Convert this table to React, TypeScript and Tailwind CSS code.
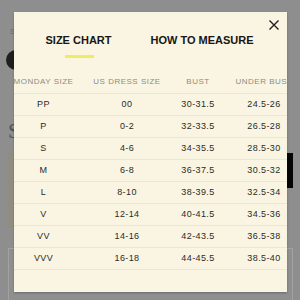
const rows = [
  ['PP', '00', '30-31.5', '24.5-26'],
  ['P', '0-2', '32-33.5', '26.5-28'],
  ['S', '4-6', '34-35.5', '28.5-30'],
  ['M', '6-8', '36-37.5', '30.5-32'],
  ['L', '8-10', '38-39.5', '32.5-34'],
  ['V', '12-14', '40-41.5', '34.5-36'],
  ['VV', '14-16', '42-43.5', '36.5-38'],
  ['VVV', '16-18', '44-45.5', '38.5-40'],
]

const headers = ['MONDAY SIZE', 'US DRESS SIZE', 'BUST', 'UNDER BUST']

export default function App() {
  return (
    <div
      className="relative w-[300px] h-[300px] overflow-hidden bg-[#8e8e8e]"
      style={{ fontFamily: '"Liberation Sans", Arial, sans-serif' }}
    >
      {/* dimmed page behind the modal */}
      <div className="flex flex-col pl-[6px] pr-[7px] pt-[28px]">
        <span className="pl-[4px] text-[7px] leading-[8px] text-[#6c6c6c]">S</span>
        <div className="mt-[14px] w-[22px] h-[20px] rounded-full bg-[#1e1e1e]" />
        <span
          className="mt-[50px] pl-[2px] text-[22px] leading-[22px] text-[#555]"
          style={{ fontFamily: '"Liberation Serif", serif' }}
        >
          S
        </span>
        <div className="mt-[11px] flex items-start">
          <div className="ml-[2px] flex-1 h-[75px] bg-[#908d80]" />
          <div className="w-[6px] h-[35px] bg-[#050505]" />
        </div>
        <div className="mt-[20px] ml-[2px] h-[60px] border border-[#a2a2a2] bg-[#8f8f8f]" />
      </div>

      {/* size chart modal */}
      <div className="absolute left-[14px] top-[12px] w-[273px] h-[280px] overflow-hidden bg-[#faf5e3] shadow-[0_1px_2px_rgba(0,0,0,0.25)]">
        <button className="absolute left-[255px] top-[8px] w-[10px] h-[10px]">
          <svg width="10" height="10" viewBox="0 0 10 10" fill="none" stroke="#1f1f1f" strokeWidth="1.4">
            <path d="M0.5 0.5 L9.5 9.5 M9.5 0.5 L0.5 9.5" />
          </svg>
        </button>

        {/* tabs */}
        <div className="flex pl-[15px] pt-[22px]">
          <div className="w-[99px] flex flex-col items-center">
            <span className="text-[11px] leading-[13px] font-bold text-[#161616]">SIZE CHART</span>
            <div className="mt-[8px] ml-[2px] w-[29px] h-[3px] bg-[#f1ec5a]" />
          </div>
          <div className="w-[148px] flex justify-center">
            <span className="text-[11px] leading-[13px] font-bold text-[#161616]">HOW TO MEASURE</span>
          </div>
        </div>

        {/* table */}
        <div className="mt-[12px]">
          <div className="h-[24px] border-b border-[#ece6d2] ml-[-11px] grid grid-cols-[81px_86px_56px_76px] items-center">
            {headers.map(h => (
              <span key={h} className="text-center whitespace-nowrap text-[8px] tracking-[0.5px] text-[#8f8b80]">
                {h}
              </span>
            ))}
          </div>
          {rows.map(r => (
            <div
              key={r[0]}
              className="h-[22px] border-b border-[#ece6d2] ml-[-11px] grid grid-cols-[81px_86px_56px_76px] items-center"
            >
              {r.map((c, i) => (
                <span key={i} className="text-center whitespace-nowrap text-[9px] tracking-[0.4px] text-[#2a2a2a]">
                  {c}
                </span>
              ))}
            </div>
          ))}
        </div>
      </div>
    </div>
  )
}
